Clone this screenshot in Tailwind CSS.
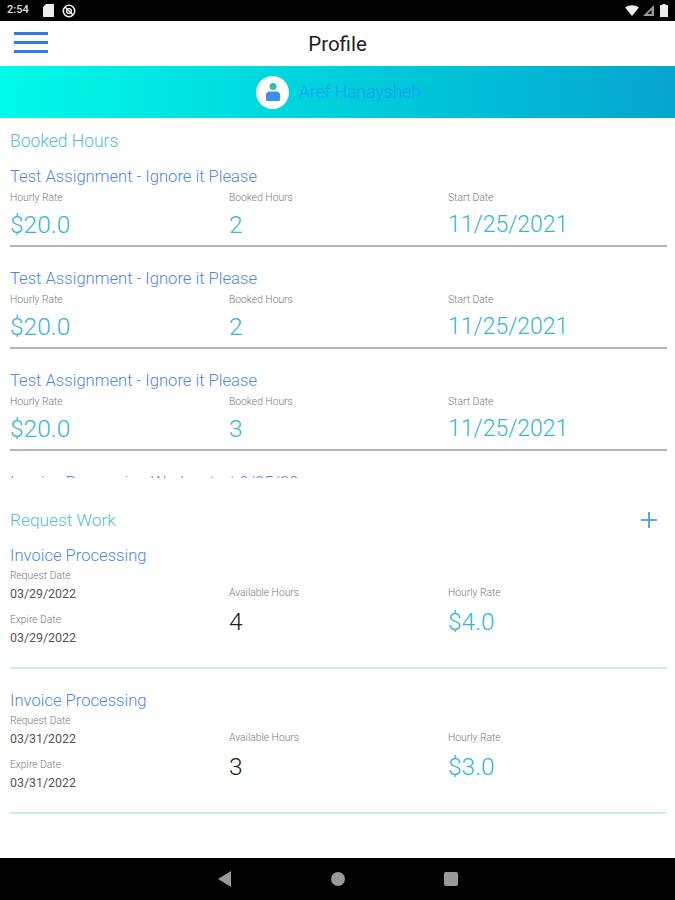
<!DOCTYPE html>
<html lang="en">
<head>
  <meta charset="UTF-8">
  <meta name="viewport" content="width=device-width, initial-scale=1.0">
  <title>Profile</title>
  <script src="https://cdn.jsdelivr.net/npm/@tailwindcss/browser@4"></script>
</head>
<body class="bg-white font-['Roboto',sans-serif]">
  <div class="flex flex-col w-[675px] h-[900px] overflow-hidden">

    <!-- status bar -->
    <div class="h-[21px] bg-black flex items-center justify-between pl-[7px] pr-[7px] shrink-0">
      <div class="flex items-center">
        <span class="text-[11px] text-[#e0e0e0] font-medium w-[36px]">2:54</span>
        <svg class="w-[11px] h-[13px] mr-[8px]" viewBox="0 0 11 13"><path d="M3 0H11V13H0V3Z" fill="#eee"/></svg>
        <svg class="w-[14px] h-[14px]" viewBox="0 0 14 14" fill="none" stroke="#eee"><circle cx="7" cy="7" r="5.7" stroke-width="1.6"/><circle cx="7" cy="7" r="2.4" stroke-width="1.4"/><path d="M3 3L11 11" stroke-width="1.4"/></svg>
      </div>
      <div class="flex items-center gap-[4px]">
        <svg class="w-[14px] h-[11px]" viewBox="0 0 14 11"><path d="M0 2.500Q7 -2 14 2.500L7 11Z" fill="#eee"/></svg>
        <svg class="w-[11px] h-[11px]" viewBox="0 0 11 11"><path d="M11 0V11H0Z" fill="#999"/><path d="M8.500 5V9H4.500Z" fill="#000"/></svg>
        <svg class="w-[8px] h-[13px] ml-[2px]" viewBox="0 0 8 13"><path d="M2.500 0H5.500V1H8V13H0V1H2.500Z" fill="#eee"/></svg>
      </div>
    </div>

    <!-- app bar -->
    <div class="h-[45px] bg-white flex items-center justify-center relative shrink-0 pt-[1px]">
      <div class="absolute left-[14px] top-[11px] w-[34px] flex flex-col gap-[6px]">
        <div class="h-[3px] bg-[#2f7bea]"></div>
        <div class="h-[3px] bg-[#2f7bea]"></div>
        <div class="h-[3px] bg-[#2f7bea]"></div>
      </div>
      <span class="text-[20.500px] text-[#222]">Profile</span>
    </div>

    <!-- user banner -->
    <div class="h-[52px] bg-gradient-to-r from-[#00fbe8] to-[#07a5cf] flex items-center justify-center gap-[10px] pl-[2px] shrink-0">
      <div class="w-[33px] h-[33px] rounded-full bg-white flex items-center justify-center">
        <svg class="w-[16px] h-[20px]" viewBox="0 0 16 20"><circle cx="8" cy="4.500" r="3.500" fill="#2fc0a8"/><path d="M1 18V13Q1 9.500 5 9.500H11Q15 9.500 15 13V18Q15 19 14 19H2Q1 19 1 18Z" fill="#3a8fe8"/></svg>
      </div>
      <span class="text-[17.500px] font-light text-[#1c9cf0]">Aref Hanaysheh</span>
    </div>

    <!-- booked hours -->
    <div class="h-[360px] overflow-hidden pl-[10px] pr-[8px] shrink-0">
      <h2 class="text-[17.500px] font-light text-[#55bcd9] h-[47px] pt-[11px] leading-[24px]">Booked Hours</h2>

      <div class="h-[102px]">
        <h3 class="text-[16.600px] font-light text-[#4f86e8] leading-[24px]">Test Assignment - Ignore it Please</h3>
        <div class="grid grid-cols-[219px_219px_1fr] mt-[2px] h-[54px]">
          <div><p class="text-[10.300px] font-light text-[#777] leading-[14px]">Hourly Rate</p><p class="text-[24.500px] font-light text-[#35b5d8] leading-[30px] mt-[5px]">$20.0</p></div>
          <div><p class="text-[10.300px] font-light text-[#777] leading-[14px]">Booked Hours</p><p class="text-[24.500px] font-light text-[#35b5d8] leading-[30px] mt-[5px]">2</p></div>
          <div><p class="text-[10.300px] font-light text-[#777] leading-[14px]">Start Date</p><p class="text-[23px] font-light text-[#35b5d8] leading-[30px] mt-[5px]">11/25/2021</p></div>
        </div>
        <div class="h-[2px] bg-[#b5b5b5]"></div>
      </div>

      <div class="h-[102px]">
        <h3 class="text-[16.600px] font-light text-[#4f86e8] leading-[24px]">Test Assignment - Ignore it Please</h3>
        <div class="grid grid-cols-[219px_219px_1fr] mt-[2px] h-[54px]">
          <div><p class="text-[10.300px] font-light text-[#777] leading-[14px]">Hourly Rate</p><p class="text-[24.500px] font-light text-[#35b5d8] leading-[30px] mt-[5px]">$20.0</p></div>
          <div><p class="text-[10.300px] font-light text-[#777] leading-[14px]">Booked Hours</p><p class="text-[24.500px] font-light text-[#35b5d8] leading-[30px] mt-[5px]">2</p></div>
          <div><p class="text-[10.300px] font-light text-[#777] leading-[14px]">Start Date</p><p class="text-[23px] font-light text-[#35b5d8] leading-[30px] mt-[5px]">11/25/2021</p></div>
        </div>
        <div class="h-[2px] bg-[#b5b5b5]"></div>
      </div>

      <div class="h-[102px]">
        <h3 class="text-[16.600px] font-light text-[#4f86e8] leading-[24px]">Test Assignment - Ignore it Please</h3>
        <div class="grid grid-cols-[219px_219px_1fr] mt-[2px] h-[54px]">
          <div><p class="text-[10.300px] font-light text-[#777] leading-[14px]">Hourly Rate</p><p class="text-[24.500px] font-light text-[#35b5d8] leading-[30px] mt-[5px]">$20.0</p></div>
          <div><p class="text-[10.300px] font-light text-[#777] leading-[14px]">Booked Hours</p><p class="text-[24.500px] font-light text-[#35b5d8] leading-[30px] mt-[5px]">3</p></div>
          <div><p class="text-[10.300px] font-light text-[#777] leading-[14px]">Start Date</p><p class="text-[23px] font-light text-[#35b5d8] leading-[30px] mt-[5px]">11/25/2021</p></div>
        </div>
        <div class="h-[2px] bg-[#b5b5b5]"></div>
      </div>

      <h3 class="text-[16.600px] font-light text-[#4f86e8] leading-[24px]">Invoice Processing Work - start 9/25/22</h3>
    </div>

    <!-- request work -->
    <div class="flex-1 pl-[10px] pr-[8px]">
      <div class="flex items-center justify-between h-[24px] mt-[31px]">
        <h2 class="text-[17.300px] font-light text-[#55bcd9]">Request Work</h2>
        <svg class="w-[16px] h-[16px] mr-[10px] -mt-[2px]" viewBox="0 0 16 16"><path d="M7 0H9V7H16V9H9V16H7V9H0V7H7Z" fill="#5aa0f5"/></svg>
      </div>

      <div class="h-[145px] mt-[11px]">
        <h3 class="text-[16.600px] font-light text-[#4f86e8] leading-[24px]">Invoice Processing</h3>
        <div class="grid grid-cols-[219px_219px_1fr] h-[98px] mt-[1px]">
          <div>
            <p class="text-[10.300px] font-light text-[#777] leading-[14px]">Request Date</p>
            <p class="text-[12.400px] text-[#555] leading-[16px] mt-[3px]">03/29/2022</p>
            <p class="text-[10.300px] font-light text-[#777] leading-[14px] mt-[11px]">Expire Date</p>
            <p class="text-[12.400px] text-[#555] leading-[16px] mt-[3px]">03/29/2022</p>
          </div>
          <div class="pt-[17px]"><p class="text-[10.300px] font-light text-[#777] leading-[14px]">Available Hours</p><p class="text-[24.500px] font-light text-[#222] leading-[30px] mt-[7px]">4</p></div>
          <div class="pt-[17px]"><p class="text-[10.300px] font-light text-[#777] leading-[14px]">Hourly Rate</p><p class="text-[24.500px] font-light text-[#35b5d8] leading-[30px] mt-[7px]">$4.0</p></div>
        </div>
        <div class="h-[2px] bg-[#c5f2d8]"></div>
      </div>

      <div class="h-[145px]">
        <h3 class="text-[16.600px] font-light text-[#4f86e8] leading-[24px]">Invoice Processing</h3>
        <div class="grid grid-cols-[219px_219px_1fr] h-[98px] mt-[1px]">
          <div>
            <p class="text-[10.300px] font-light text-[#777] leading-[14px]">Request Date</p>
            <p class="text-[12.400px] text-[#555] leading-[16px] mt-[3px]">03/31/2022</p>
            <p class="text-[10.300px] font-light text-[#777] leading-[14px] mt-[11px]">Expire Date</p>
            <p class="text-[12.400px] text-[#555] leading-[16px] mt-[3px]">03/31/2022</p>
          </div>
          <div class="pt-[17px]"><p class="text-[10.300px] font-light text-[#777] leading-[14px]">Available Hours</p><p class="text-[24.500px] font-light text-[#222] leading-[30px] mt-[7px]">3</p></div>
          <div class="pt-[17px]"><p class="text-[10.300px] font-light text-[#777] leading-[14px]">Hourly Rate</p><p class="text-[24.500px] font-light text-[#35b5d8] leading-[30px] mt-[7px]">$3.0</p></div>
        </div>
        <div class="h-[2px] bg-[#c5f2d8]"></div>
      </div>
    </div>

    <!-- nav bar -->
    <div class="h-[42px] bg-black flex items-center justify-center gap-[99px] shrink-0 pl-[1px]">
      <svg class="w-[14px] h-[16px]" viewBox="0 0 14 16"><path d="M13 0V16L0 8Z" fill="#999"/></svg>
      <div class="w-[14px] h-[14px] rounded-full bg-[#999]"></div>
      <div class="w-[14px] h-[14px] rounded-[2px] bg-[#999]"></div>
    </div>
  </div>
</body>
</html>
